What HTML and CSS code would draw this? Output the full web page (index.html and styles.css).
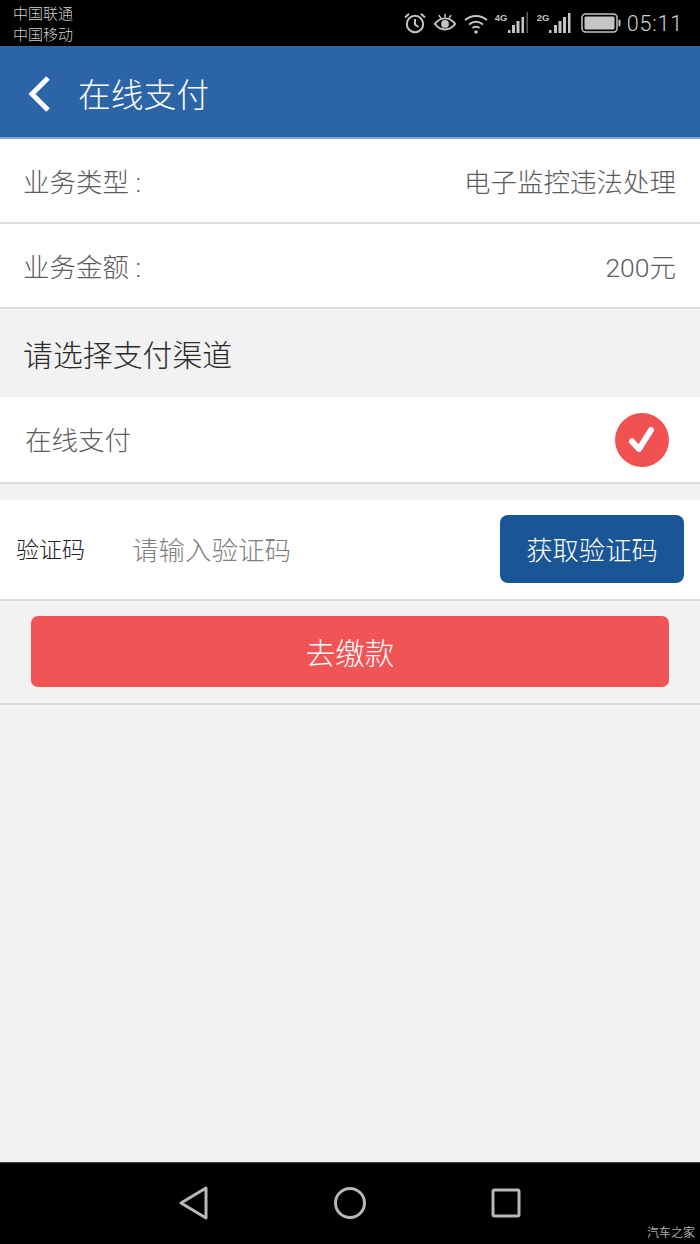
FILE: index.html
```html
<!DOCTYPE html>
<html lang="zh">
<head>
<meta charset="utf-8">
<title>在线支付</title>
<link rel="stylesheet" href="styles.css">
</head>
<body>
<div class="app">
  <div class="status">
    <div class="carriers"><div>中国联通</div><div>中国移动</div></div>
    <div class="status-right">
      <svg class="ic-alarm" width="24" height="24" viewBox="0 0 24 24" fill="none" stroke="#c4c4c4" stroke-width="2"><circle cx="12" cy="13" r="8.2"/><path d="M12 8v5.5l3.5 2.5M2 6.5 6 2.8M22 6.5 18 2.8"/></svg>
      <svg class="ic-eye" width="24" height="24" viewBox="0 0 26 24" fill="none" stroke="#c4c4c4" stroke-width="2"><path d="M2 13c3-4 7-6 11-6s8 2 11 6c-3 4-7 6-11 6s-8-2-11-6Z"/><circle cx="13" cy="13" r="4.2" fill="#c4c4c4" stroke="none"/><path d="M13 2v4M6.5 3.5 8.5 7M19.5 3.500 17.500 7" stroke-width="1.6"/></svg>
      <svg class="ic-wifi" width="26" height="24" viewBox="0 0 26 24" fill="none" stroke="#c4c4c4" stroke-width="2"><path d="M2 9c6.500-5.500 15.500-5.500 22 0M6 13.500c4.500-3.500 9.500-3.500 14 0M9.500 17c2.200-1.500 4.800-1.500 7 0"/><circle cx="13" cy="21" r="1.800" fill="#c4c4c4" stroke="none"/></svg>
      <div class="signal">
        <span class="net">4G</span>
        <svg width="34" height="24" viewBox="0 0 34 24" fill="#c4c4c4"><rect x="13" y="19" width="2.500" height="3"/><rect x="17" y="14" width="3" height="8"/><rect x="21.500" y="10" width="3" height="12"/><rect x="26.500" y="6" width="2.500" height="16"/><rect x="31.500" y="1" width="1.500" height="21" fill="#5a5a5a"/></svg>
      </div>
      <div class="signal signal-second">
        <span class="net">2G</span>
        <svg width="34" height="24" viewBox="0 0 34 24" fill="#c4c4c4"><rect x="12" y="19" width="2.500" height="3"/><rect x="17" y="14" width="3" height="8"/><rect x="21.500" y="10" width="3" height="12"/><rect x="26" y="6" width="3" height="16"/><rect x="31" y="2" width="2.500" height="20"/></svg>
      </div>
      <svg class="ic-battery" width="40" height="20" viewBox="0 0 40 20"><rect x="1" y="1" width="35" height="18" rx="3.500" fill="none" stroke="#c4c4c4" stroke-width="1.500"/><rect x="3.500" y="3.500" width="30" height="13" rx="1.500" fill="#c4c4c4"/><rect x="37.500" y="6.500" width="2" height="7" rx="1" fill="#c4c4c4"/></svg>
      <span class="time">05:11</span>
    </div>
  </div>

  <header class="topbar">
    <svg class="back" width="24" height="38" viewBox="0 0 24 38" fill="none" stroke="#fff" stroke-width="5"><path d="M21 3 5 19l16 16"/></svg>
    <h1 class="title">在线支付</h1>
  </header>

  <div class="row info-row"><span>业务类型 :</span><span>电子监控违法处理</span></div>
  <div class="row info-row"><span>业务金额 :</span><span>200元</span></div>

  <h2 class="section">请选择支付渠道</h2>

  <div class="row pay-row">
    <span class="pay-name">在线支付</span>
    <svg width="54" height="54" viewBox="0 0 54 54"><circle cx="27" cy="27" r="27" fill="#f05252"/><path d="M17 28.500 24 36 36 17" fill="none" stroke="#fff" stroke-width="6" stroke-linecap="round" stroke-linejoin="round"/></svg>
  </div>

  <div class="row code-row">
    <span class="code-label">验证码</span>
    <span class="code-input">请输入验证码</span>
    <button class="code-btn" type="button">获取验证码</button>
  </div>

  <div class="submit-wrap">
    <button class="submit" type="button">去缴款</button>
  </div>

  <div class="spacer"></div>

  <nav class="navbar">
    <svg width="30" height="34" viewBox="0 0 30 34" fill="none" stroke="#b8b8b8" stroke-width="3" stroke-linejoin="round"><path d="M27 2 2 17l25 15Z"/></svg>
    <svg width="32" height="34" viewBox="0 0 32 34" fill="none" stroke="#b8b8b8" stroke-width="3"><circle cx="16" cy="17" r="14.500"/></svg>
    <svg width="30" height="30" viewBox="0 0 30 30" fill="none" stroke="#b8b8b8" stroke-width="3" stroke-linejoin="round"><rect x="2" y="2" width="26" height="26" rx="1.500"/></svg>
    <span class="mark">汽车之家</span>
  </nav>
</div>
</body>
</html>
```

FILE: styles.css
```css
* { box-sizing: border-box; }
html, body { margin: 0; padding: 0; }
body {
  font-family: Roboto, "Noto Sans CJK SC", "Liberation Sans", sans-serif;
  font-weight: 300;
  background: #f2f2f2;
}
.app {
  width: 700px;
  height: 1244px;
  display: flex;
  flex-direction: column;
  overflow: hidden;
  position: relative;
}
.status {
  height: 46px;
  flex: none;
  background: #000;
  display: flex;
  justify-content: space-between;
  align-items: center;
  padding: 0 17px 0 13px;
}
.carriers {
  font-size: 15px;
  line-height: 21px;
  color: #cfcfcf;
  padding-top: 4px;
}
.status-right {
  display: flex;
  align-items: center;
  color: #c4c4c4;
  gap: 6px;
}
.signal {
  position: relative;
  width: 34px;
  height: 24px;
}
.signal-second { margin-left: 2px; }
.net {
  position: absolute;
  left: 0;
  top: 2px;
  font-family: "Liberation Sans", sans-serif;
  font-size: 9.500px;
  line-height: 9px;
  font-weight: 700;
}
.signal svg { display: block; }
.ic-battery { margin-left: 4px; }
.time {
  font-size: 21.500px;
  letter-spacing: 0.8px;
  color: #d0d0d0;
}
.topbar {
  height: 93px;
  flex: none;
  background: #2b65a8;
  border-bottom: 2px solid #7da6d3;
  display: flex;
  align-items: center;
  padding-left: 27px;
  gap: 27px;
}
.back { flex: none; margin-top: 4px; }
.title {
  margin: 0;
  font-size: 32.800px;
  font-weight: 300;
  color: #fff;
  line-height: 1;
  padding-top: 10px;
}
.row {
  flex: none;
  background: #fff;
  display: flex;
  align-items: center;
  border-bottom: 2px solid #dcdcdc;
}
.info-row {
  height: 85px;
  justify-content: space-between;
  padding: 0 24px 0 23px;
  font-size: 26.500px;
  color: #5c5c5c;
}
.section {
  margin: 0;
  height: 88px;
  flex: none;
  display: flex;
  align-items: center;
  padding-left: 23px;
  font-size: 29.900px;
  font-weight: 300;
  color: #2a2a2a;
}
.pay-row {
  height: 87px;
  justify-content: space-between;
  padding: 0 31px 0 25px;
  font-size: 26.500px;
  color: #5c5c5c;
}
.pay-name { padding-bottom: 2px; }
.code-row {
  height: 101px;
  margin-top: 16px;
  padding: 0 16px;
}
.code-label {
  font-size: 23px;
  color: #222;
  width: 116px;
  flex: none;
  padding-bottom: 3px;
}
.code-input {
  flex: 1;
  font-size: 26.500px;
  color: #808080;
  padding-bottom: 3px;
}
.code-btn {
  width: 184px;
  height: 68px;
  margin-top: -2px;
  border: 0;
  border-radius: 8px;
  background: #1a5596;
  color: #fff;
  font: inherit;
  font-size: 26.300px;
  padding: 0;
}
.submit-wrap {
  height: 104px;
  flex: none;
  padding: 15px 31px 0;
  border-bottom: 2px solid #dcdcdc;
}
.submit {
  display: block;
  width: 100%;
  height: 71px;
  border: 0;
  border-radius: 7px;
  background: #f05454;
  color: #fff;
  font: inherit;
  font-size: 29.500px;
  padding: 0 0 1px;
}
.spacer { flex: 1; }
.navbar {
  height: 82px;
  flex: none;
  background: #000;
  border-top: 1px solid #444;
  display: grid;
  grid-template-columns: repeat(3, 156px);
  justify-content: center;
  justify-items: center;
  align-items: center;
  padding-bottom: 1px;
}
.mark {
  position: absolute;
  right: 5px;
  bottom: 4px;
  font-size: 12px;
  line-height: 14px;
  color: #e8e8e8;
}
```
